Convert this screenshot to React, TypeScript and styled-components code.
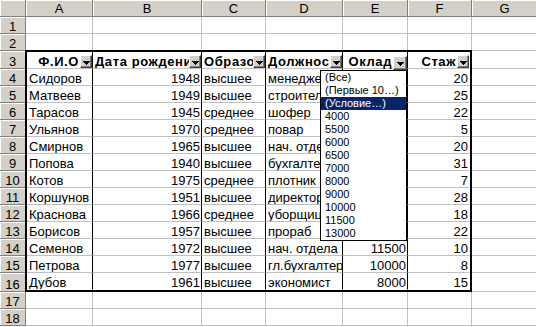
import React from "react";
import styled, { createGlobalStyle } from "styled-components";

const GlobalStyle = createGlobalStyle`
  body {
    margin: 0;
    background: #fff;
    font-family: "Liberation Sans", Arial, sans-serif;
  }
`;

type Align = "left" | "right";

const columns = ["A", "B", "C", "D", "E", "F", "G"];

const headers: { title: string; align: Align; open?: boolean }[] = [
  { title: "Ф.И.О", align: "right" },
  { title: "Дата рождения", align: "left" },
  { title: "Образование", align: "left" },
  { title: "Должность", align: "left" },
  { title: "Оклад", align: "right", open: true },
  { title: "Стаж", align: "right" },
];

const rows: (string | number)[][] = [
  ["Сидоров", 1948, "высшее", "менеджер", 9000, 20],
  ["Матвеев", 1949, "высшее", "строитель", 7000, 25],
  ["Тарасов", 1945, "среднее", "шофер", 4000, 22],
  ["Ульянов", 1970, "среднее", "повар", 5500, 5],
  ["Смирнов", 1965, "высшее", "нач. отдела", 11500, 20],
  ["Попова", 1940, "высшее", "бухгалтер", 6500, 31],
  ["Котов", 1975, "среднее", "плотник", 6000, 7],
  ["Коршунов", 1951, "высшее", "директор", 13000, 28],
  ["Краснова", 1966, "среднее", "уборщица", 4000, 18],
  ["Борисов", 1957, "высшее", "прораб", 9000, 22],
  ["Семенов", 1972, "высшее", "нач. отдела", 11500, 10],
  ["Петрова", 1977, "высшее", "гл.бухгалтер", 10000, 8],
  ["Дубов", 1961, "высшее", "экономист", 8000, 15],
];

const filterOptions = [
  "(Все)",
  "(Первые 10…)",
  "(Условие…)",
  "4000",
  "5500",
  "6000",
  "6500",
  "7000",
  "8000",
  "9000",
  "10000",
  "11500",
  "13000",
];

export default function App() {
  return (
    <>
      <GlobalStyle />
      <Sheet>
        <Grid>
          <Corner />
          {columns.map((c) => (
            <ColHead key={c}>{c}</ColHead>
          ))}

          {[1, 2].map((r) => (
            <React.Fragment key={r}>
              <RowHead>{r}</RowHead>
              {columns.map((c) => (
                <EmptyCell key={c} />
              ))}
            </React.Fragment>
          ))}

          {Array.from({ length: 14 }, (_, i) => (
            <React.Fragment key={i + 3}>
              <RowHead>{i + 3}</RowHead>
              <EmptyCell />
            </React.Fragment>
          ))}

          {[17, 18].map((r) => (
            <React.Fragment key={r}>
              <RowHead>{r}</RowHead>
              {columns.map((c) => (
                <EmptyCell key={c} />
              ))}
            </React.Fragment>
          ))}

          <Table>
            {headers.map((h, i) => (
              <HeaderCell key={h.title} $align={h.align} $open={h.open} $last={i === 5}>
                {h.title}
                <FilterButton $open={h.open}>
                  <svg width="7" height="4" viewBox="0 0 7 4" shapeRendering="crispEdges">
                    <path d="M0 0h7v1H0zM1 1h5v1H1zM2 2h3v1H2zM3 3h1v1H3z" fill="#000" />
                  </svg>
                </FilterButton>
              </HeaderCell>
            ))}
            {rows.map((row, ri) =>
              row.map((v, ci) => (
                <DataCell
                  key={`${ri}-${ci}`}
                  $align={typeof v === "number" ? "right" : "left"}
                  $last={ci === 5}
                  $bottom={ri === rows.length - 1}
                >
                  {v}
                </DataCell>
              ))
            )}
          </Table>
        </Grid>

        <FilterList>
          {filterOptions.map((o) => (
            <FilterOption key={o} $selected={o === "(Условие…)"}>
              {o}
            </FilterOption>
          ))}
        </FilterList>
      </Sheet>
    </>
  );
}

const Sheet = styled.div`
  position: relative;
  width: 536px;
  height: 327px;
  overflow: hidden;
  background: #fff;
`;

const Grid = styled.div`
  display: grid;
  width: 538px;
  grid-template-columns: 26px 67px 109px 64px 77px 65px 64px 66px;
  grid-template-rows: 17px 17px 17px 18px repeat(12, 17px) 19px 17px 17px;
  font-size: 13px;
  color: #000;
`;

const HeadBase = styled.div`
  box-sizing: border-box;
  background: #d4d0c8;
  border-right: 1px solid #808080;
  border-bottom: 1px solid #808080;
  box-shadow: inset 1px 1px 0 #fff;
`;

const Corner = styled(HeadBase)``;

const ColHead = styled(HeadBase)`
  padding-top: 2px;
  line-height: 14px;
  text-align: center;
`;

const RowHead = styled(HeadBase)`
  display: flex;
  align-items: flex-end;
  justify-content: center;
  line-height: 13px;
`;

const EmptyCell = styled.div`
  box-sizing: border-box;
  border-right: 1px solid #c0c0c0;
  border-bottom: 1px solid #c0c0c0;
`;

const Table = styled.div`
  grid-column: 2 / 8;
  grid-row: 4 / 18;
  margin: -1px 0 0 -1px;
  box-sizing: border-box;
  border: 2px solid #000;
  background: #fff;
  display: grid;
  grid-template-columns: 66px 109px 64px 77px 65px 62px;
  grid-template-rows: repeat(14, 17px);
`;

const CellBase = styled.div<{ $align: Align; $last?: boolean }>`
  box-sizing: border-box;
  display: flex;
  align-items: flex-end;
  justify-content: ${(p) => (p.$align === "right" ? "flex-end" : "flex-start")};
  padding: 0 1px 0 2px;
  border-right: 1px solid ${(p) => (p.$last ? "transparent" : "#000")};
  border-bottom: 1px solid #c0c0c0;
  line-height: 13px;
  white-space: nowrap;
  overflow: hidden;
`;

const HeaderCell = styled(CellBase)<{ $open?: boolean }>`
  position: relative;
  font-weight: bold;
  letter-spacing: 0.6px;
  padding-right: ${(p) => (p.$align === "right" ? (p.$open ? 15 : 13) : 1)}px;
  overflow: ${(p) => (p.$open ? "visible" : "hidden")};
  z-index: ${(p) => (p.$open ? 1 : "auto")};
`;

const DataCell = styled(CellBase)<{ $bottom?: boolean }>`
  border-bottom-color: ${(p) => (p.$bottom ? "transparent" : "#c0c0c0")};
`;

const FilterButton = styled.span<{ $open?: boolean }>`
  position: absolute;
  right: 0;
  bottom: ${(p) => (p.$open ? -2 : 0)}px;
  width: ${(p) => (p.$open ? 14 : 12)}px;
  height: ${(p) => (p.$open ? 14 : 13)}px;
  box-sizing: border-box;
  padding-top: 2px;
  display: flex;
  align-items: center;
  justify-content: center;
  background: #d4d0c8;
  border: 1px solid;
  border-color: #fff #404040 #404040 #fff;
  box-shadow: inset -1px -1px 0 #808080;
`;

const FilterList = styled.ul`
  position: absolute;
  left: 320px;
  top: 70px;
  z-index: 2;
  width: 87px;
  height: 171px;
  margin: 0;
  padding: 0;
  list-style: none;
  box-sizing: border-box;
  border: 1px solid #000;
  background: #fff;
  font-size: 11px;
`;

const FilterOption = styled.li<{ $selected?: boolean }>`
  height: 13px;
  line-height: 13px;
  padding-left: 4px;
  white-space: nowrap;
  background: ${(p) => (p.$selected ? "#0a246a" : "transparent")};
  color: ${(p) => (p.$selected ? "#fff" : "#000")};
`;
